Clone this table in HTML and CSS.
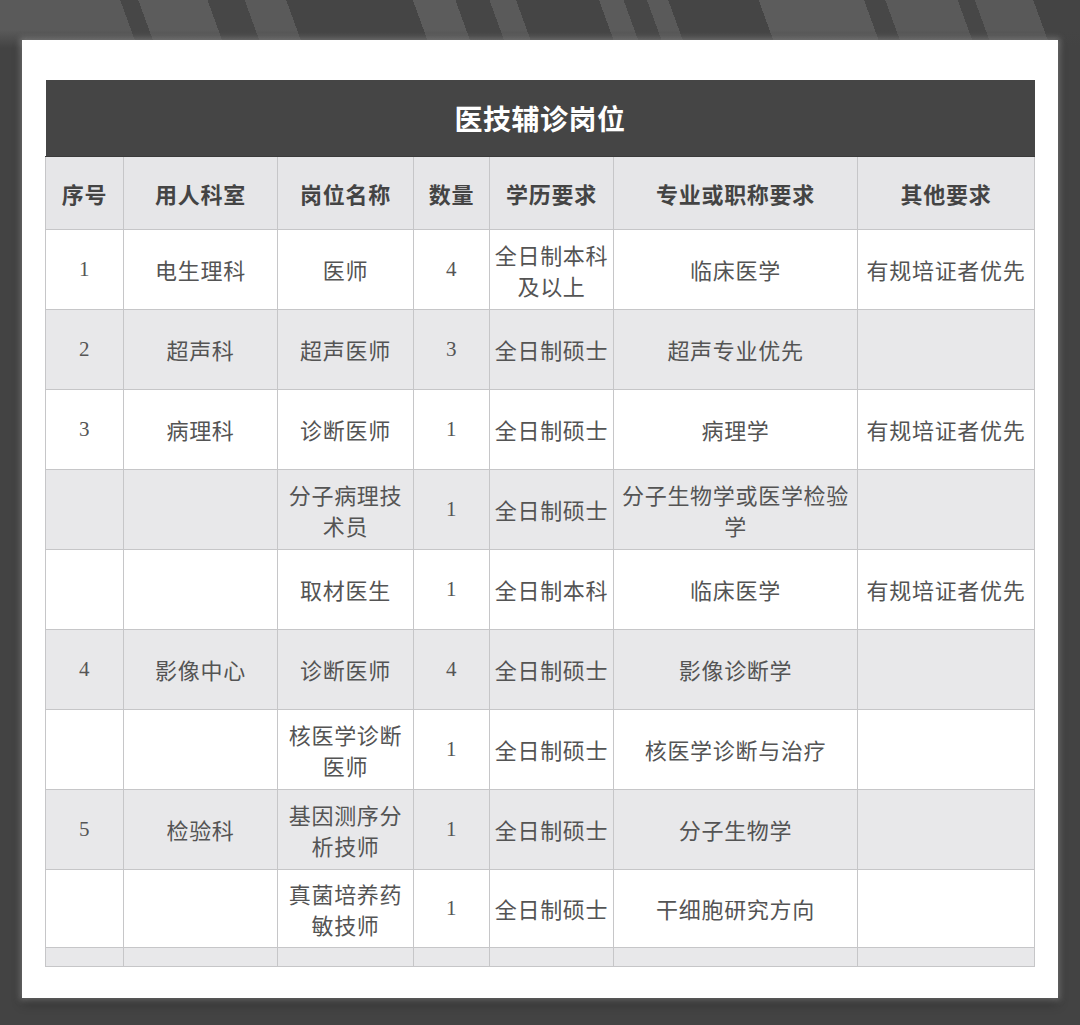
FILE: index.html
```html
<!DOCTYPE html>
<html lang="zh-CN">
<head>
<meta charset="utf-8">
<title>医技辅诊岗位</title>
<link rel="stylesheet" href="styles.css">
</head>
<body>
<div class="card">
  <table class="jobs">
    <colgroup>
      <col class="c-no"><col class="c-dept"><col class="c-post"><col class="c-num"><col class="c-edu"><col class="c-major"><col class="c-other">
    </colgroup>
    <thead>
      <tr class="title-row"><th colspan="7">医技辅诊岗位</th></tr>
      <tr class="head-row">
        <th>序号</th><th>用人科室</th><th>岗位名称</th><th>数量</th><th>学历要求</th><th>专业或职称要求</th><th>其他要求</th>
      </tr>
    </thead>
    <tbody>
      <tr><td class="num">1</td><td>电生理科</td><td>医师</td><td class="num">4</td><td>全日制本科及以上</td><td>临床医学</td><td>有规培证者优先</td></tr>
      <tr class="alt"><td class="num">2</td><td>超声科</td><td>超声医师</td><td class="num">3</td><td>全日制硕士</td><td>超声专业优先</td><td></td></tr>
      <tr><td class="num">3</td><td>病理科</td><td>诊断医师</td><td class="num">1</td><td>全日制硕士</td><td>病理学</td><td>有规培证者优先</td></tr>
      <tr class="alt"><td></td><td></td><td>分子病理技术员</td><td class="num">1</td><td>全日制硕士</td><td>分子生物学或医学检验学</td><td></td></tr>
      <tr><td></td><td></td><td>取材医生</td><td class="num">1</td><td>全日制本科</td><td>临床医学</td><td>有规培证者优先</td></tr>
      <tr class="alt"><td class="num">4</td><td>影像中心</td><td>诊断医师</td><td class="num">4</td><td>全日制硕士</td><td>影像诊断学</td><td></td></tr>
      <tr><td></td><td></td><td>核医学诊断医师</td><td class="num">1</td><td>全日制硕士</td><td>核医学诊断与治疗</td><td></td></tr>
      <tr class="alt"><td class="num">5</td><td>检验科</td><td>基因测序分析技师</td><td class="num">1</td><td>全日制硕士</td><td>分子生物学</td><td></td></tr>
      <tr class="last"><td></td><td></td><td>真菌培养药敏技师</td><td class="num">1</td><td>全日制硕士</td><td>干细胞研究方向</td><td></td></tr>
      <tr class="alt stub"><td></td><td></td><td></td><td></td><td></td><td></td><td></td></tr>
    </tbody>
  </table>
</div>
</body>
</html>
```
FILE: styles.css
```css
html, body {
  margin: 0;
  padding: 0;
}
body {
  width: 1080px;
  height: 1025px;
  overflow: hidden;
  background-color: #434343;
  background-image:
    linear-gradient(to bottom, rgba(67,67,67,0) 0px, rgba(67,67,67,0) 30px, #434343 48px),
    linear-gradient(70deg,
      #5a5a5a 0px, #5a5a5a 130px,
      #474747 130px, #474747 147px,
      #5c5c5c 147px, #5c5c5c 212px,
      #474747 212px, #474747 247px,
      #5a5a5a 247px, #5a5a5a 286px,
      #454545 286px, #454545 405px,
      #5c5c5c 405px, #5c5c5c 445px,
      #464646 445px, #464646 477px,
      #5a5a5a 477px, #5a5a5a 502px,
      #454545 502px, #454545 580px,
      #5b5b5b 580px, #5b5b5b 603px,
      #474747 603px, #474747 625px,
      #5a5a5a 625px, #5a5a5a 645px,
      #454545 645px, #454545 730px,
      #5c5c5c 730px, #5c5c5c 829px,
      #474747 829px, #474747 849px,
      #5a5a5a 849px, #5a5a5a 917px,
      #474747 917px, #474747 933px,
      #595959 933px, #595959 988px,
      #444444 988px);
  background-size: 100% 100%, 100% 50px;
  background-repeat: no-repeat;
  font-family: "Noto Sans CJK SC", "Noto Sans", sans-serif;
  padding-top: 40px;
  box-sizing: border-box;
}
.card {
  width: 1036px;
  height: 958px;
  margin-left: 22px;
  background: #ffffff;
  box-sizing: border-box;
  padding: 40px 24px 0 23px;
  box-shadow: 0 0 6px 2px rgba(200,200,200,0.35), 0 6px 10px rgba(0,0,0,0.25);
}
.jobs {
  width: 989px;
  border-collapse: collapse;
  table-layout: fixed;
  color: #545454;
  font-size: 22px;
  letter-spacing: 0.7px;
}
.c-no { width: 78px; }
.c-dept { width: 154px; }
.c-post { width: 136px; }
.c-num { width: 76px; }
.c-edu { width: 124px; }
.c-major { width: 244px; }
.c-other { width: 177px; }

.jobs th, .jobs td {
  border: 1px solid #c6c6c8;
  text-align: center;
  vertical-align: middle;
  padding: 0 3px;
  line-height: 31px;
}
.title-row th {
  background: #454545;
  color: #ffffff;
  font-size: 28px;
  font-weight: 700;
  height: 76px;
  border: 0;
  border-bottom: 1px solid #3a3a3a;
  letter-spacing: 0.5px;
}
.head-row th {
  background: #e6e6e8;
  color: #444444;
  font-weight: 700;
  height: 72px;
}
.jobs td {
  height: 79px;
  background: #ffffff;
}
.jobs tr.alt td {
  background: #e8e8ea;
}
.jobs tr.last td {
  height: 77px;
}
.jobs tr.stub td {
  height: 18px;
}
.jobs td.num {
  font-family: "Liberation Serif", "DejaVu Serif", serif;
  font-size: 21px;
  color: #555555;
}
```
